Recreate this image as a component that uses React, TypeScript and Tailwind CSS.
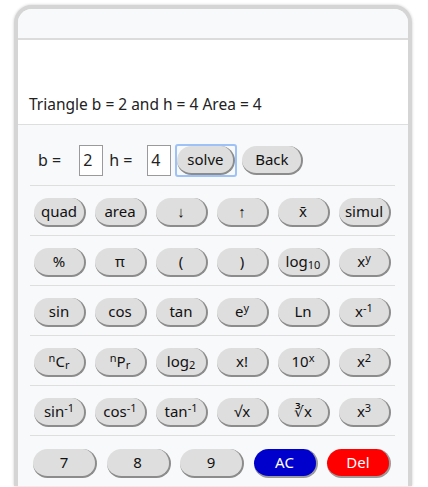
import React from "react";

const keyCls =
  "h-[29px] rounded-full bg-[#dedede] border-r-2 border-b-2 border-[#8c8c8c] text-[15px] text-[#111] flex items-center justify-center leading-none";

function Key({ children, className = "" }: { children: React.ReactNode; className?: string }) {
  return <button className={`${keyCls} ${className}`}>{children}</button>;
}

const Sup = ({ children }: { children: React.ReactNode }) => (
  <sup className="text-[11px] relative -top-[4px] align-baseline">{children}</sup>
);
const Sub = ({ children }: { children: React.ReactNode }) => (
  <sub className="text-[11px] relative top-[3px] align-baseline">{children}</sub>
);

const rows: React.ReactNode[][] = [
  ["quad", "area", "↓", "↑", "x̄", "simul"],
  ["%", "π", "(", ")", <>log<Sub>10</Sub></>, <>x<Sup>y</Sup></>],
  ["sin", "cos", "tan", <>e<Sup>y</Sup></>, "Ln", <>x<Sup>-1</Sup></>],
  [
    <><Sup>n</Sup>C<Sub>r</Sub></>,
    <><Sup>n</Sup>P<Sub>r</Sub></>,
    <>log<Sub>2</Sub></>,
    "x!",
    <>10<Sup>x</Sup></>,
    <>x<Sup>2</Sup></>,
  ],
  [
    <>sin<Sup>-1</Sup></>,
    <>cos<Sup>-1</Sup></>,
    <>tan<Sup>-1</Sup></>,
    "√x",
    "∛x",
    <>x<Sup>3</Sup></>,
  ],
];

export default function App() {
  return (
    <div className="min-h-[487px] bg-white pt-[5px] pl-[14px] overflow-hidden" style={{ fontFamily: '"Noto Sans", "Open Sans", sans-serif' }}>
      <div className="w-[398px] rounded-t-[18px] border-4 border-b-0 border-[#d5d5d5] shadow-[0_0_3px_#c8c8c8] overflow-hidden bg-[#f8f9fa]">
        {/* header strip */}
        <div className="h-[31px] bg-[#f8f9fa] border-b-2 border-[#dcdcdc]" />
        {/* display */}
        <div className="h-[85px] bg-white border-b border-[#dedede] flex items-end pl-[11px] pb-[8px]">
          <p className="text-[15.5px] text-[#222]">Triangle b = 2 and h = 4 Area = 4</p>
        </div>

        <div className="px-[12px] pr-[13px]">
          {/* inputs */}
          <div className="h-[61px] flex items-center pt-[10px] pl-[8px] text-[16px] text-[#222] border-b border-[#dedede]">
            <span>b =</span>
            <input readOnly value="2" className="ml-[18px] w-[24px] h-[31px] border border-[#9a9a9a] bg-white px-[3px] text-[16px] outline-none" />
            <span className="ml-[6px]">h =</span>
            <input readOnly value="4" className="ml-[15px] w-[24px] h-[31px] border border-[#9a9a9a] bg-white px-[3px] text-[16px] outline-none" />
            <div className="ml-[4px] rounded-[3px] border-2 border-[#9ec1f7] p-0">
              <Key className="w-[58px]">solve</Key>
            </div>
            <Key className="ml-[5px] w-[61px]">Back</Key>
          </div>

          {rows.map((r, i) => (
            <div key={i} className="h-[50px] flex items-center pt-[4px] gap-[9px] px-[4px] border-b border-[#dedede]">
              {r.map((k, j) => (
                <Key key={j} className="w-[52px]">{k}</Key>
              ))}
            </div>
          ))}

          <div className="h-[50px] flex items-center pt-[4px] gap-[9.5px] px-[3px]">
            <Key className="w-[64px]">7</Key>
            <Key className="w-[64px]">8</Key>
            <Key className="w-[64px]">9</Key>
            <Key className="w-[64px] !bg-[#0000cc] !text-white !border-[#9a9a9a]">AC</Key>
            <Key className="w-[64px] !bg-[#ff0000] !text-white !border-[#9a9a9a]">Del</Key>
          </div>
        </div>
      </div>
    </div>
  );
}
